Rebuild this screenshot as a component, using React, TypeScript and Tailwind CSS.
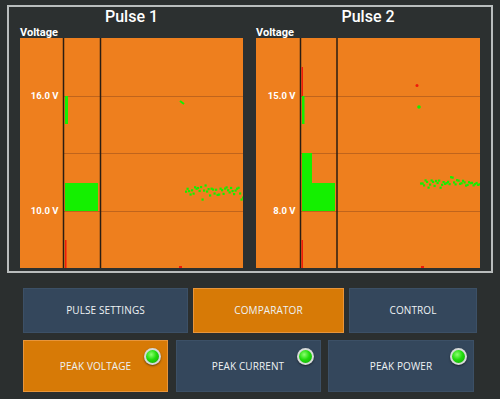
import React from "react";

type Pt = [number, number];

function scatter(seed: number, x0: number, x1: number, base: number, spread: number): Pt[] {
  let s = seed;
  const rnd = () => {
    s = (s * 9301 + 49297) % 233280;
    return s / 233280;
  };
  const pts: Pt[] = [];
  for (let x = x0; x <= x1; x += 1.5) {
    const r = rnd();
    const y = base + (rnd() - 0.5) * spread * (r > 0.75 ? 2 : 1);
    pts.push([x, y]);
  }
  return pts;
}

const scatter1 = scatter(7, 165, 222, 152, 9);
const scatter2 = scatter(13, 164, 223, 144, 6);

type Bar = { x: number; y: number; w: number; h: number; c: string };

type ChartProps = {
  title: string;
  width: number;
  split: [number, number];
  top: string;
  bottom: string;
  bars: Bar[];
  dots: Pt[];
  extra?: React.ReactNode;
};

function Chart({ title, width, split, top, bottom, bars, dots, extra }: ChartProps) {
  const grid = [58, 115, 173];
  return (
    <div className="flex flex-col" style={{ width }}>
      <div className="h-[20px] text-center text-[16px] font-medium leading-[20px] text-white">
        {title}
      </div>
      <div className="h-[11px] text-[11px] font-bold leading-[11px] text-white">Voltage</div>
      <div className="relative h-[230px] bg-[#ee7f1e]">
        <svg className="absolute inset-0" width={width} height={230}>
          {grid.map((y) => (
            <line key={y} x1={split[0]} x2={width} y1={y + 0.5} y2={y + 0.5} stroke="#c0641c" strokeWidth={1} />
          ))}
          <line x1={split[0]} x2={split[0]} y1={0} y2={230} stroke="#2a1d12" strokeWidth={1.5} />
          <line x1={split[1]} x2={split[1]} y1={0} y2={230} stroke="#2a1d12" strokeWidth={1.5} />
          {bars.map((b, i) => (
            <rect key={i} x={b.x} y={b.y} width={b.w} height={b.h} fill={b.c} />
          ))}
          {dots.map(([x, y], i) => (
            <rect key={i} x={x} y={y} width={2.2} height={2.2} fill="#14f000" />
          ))}
          {extra}
        </svg>
        <span className="absolute top-[52px] text-[9.5px] font-bold leading-[12px] text-white" style={{ right: width - split[0] + 5 }}>
          {top}
        </span>
        <span className="absolute top-[167px] text-[9.5px] font-bold leading-[12px] text-white" style={{ right: width - split[0] + 5 }}>
          {bottom}
        </span>
      </div>
    </div>
  );
}

function Led() {
  return (
    <span className="absolute right-[6px] top-[7px] flex h-[17px] w-[17px] items-center justify-center rounded-full bg-[#d6dad8] shadow-[0_1px_2px_rgba(0,0,0,0.5)]">
      <span className="h-[13px] w-[13px] rounded-full bg-[radial-gradient(circle_at_40%_35%,#8dff70_0%,#21dc0c_45%,#0f9f05_100%)]" />
    </span>
  );
}

function Btn({ label, w, h, active, led }: { label: string; w: number; h: number; active?: boolean; led?: boolean }) {
  return (
    <div
      className={[
        "relative flex items-center justify-center text-[10px] tracking-[0.1px] text-[#eef2f4]",
        active ? "border border-[#e8953a] bg-[#d77a06]" : "border border-[#3c5066] bg-[#34475c]",
      ].join(" ")}
      style={{ width: w, height: h }}
    >
      {label}
      {led ? <Led /> : null}
    </div>
  );
}

export default function App() {
  return (
    <div className="h-[399px] w-[500px] overflow-hidden bg-[#2b2f2f] pt-[5px]" style={{ fontFamily: "Roboto, 'Liberation Sans', sans-serif" }}>
      <div className="ml-[7px] flex h-[268px] w-[486px] gap-[13px] border-2 border-[#b9bdbd] bg-[#2c3030] pl-[11px]">
        <Chart
          title="Pulse 1"
          width={223}
          split={[43.5, 80.5]}
          top="16.0 V"
          bottom="10.0 V"
          bars={[
            { x: 45, y: 58, w: 3, h: 28, c: "#14f000" },
            { x: 45, y: 145, w: 33, h: 28, c: "#14f000" },
            { x: 45, y: 202, w: 1.5, h: 28, c: "#f01a0a" },
            { x: 159, y: 228, w: 3, h: 2, c: "#f01a0a" },
          ]}
          dots={scatter1}
          extra={<line x1={160} y1={63} x2={164} y2={66} stroke="#14f000" strokeWidth={2} />}
        />
        <Chart
          title="Pulse 2"
          width={224}
          split={[44.5, 81]}
          top="15.0 V"
          bottom="8.0 V"
          bars={[
            { x: 45.5, y: 29, w: 1.5, h: 29, c: "#f01a0a" },
            { x: 46, y: 58, w: 2.5, h: 28, c: "#14f000" },
            { x: 46, y: 115, w: 10, h: 30, c: "#14f000" },
            { x: 46, y: 145, w: 33, h: 28, c: "#14f000" },
            { x: 45.5, y: 202, w: 1.5, h: 28, c: "#f01a0a" },
            { x: 165, y: 228, w: 3, h: 2, c: "#f01a0a" },
          ]}
          dots={scatter2}
          extra={
            <>
              <circle cx={161} cy={47.5} r={1.5} fill="#f01a0a" />
              <circle cx={163} cy={69} r={1.8} fill="#14f000" />
            </>
          }
        />
      </div>
      <div className="ml-[23px] mt-[15px] flex flex-col gap-[7px]" style={{ fontFamily: "'Open Sans', 'Noto Sans', sans-serif" }}>
        <div className="flex gap-[5px]">
          <Btn label="PULSE SETTINGS" w={165} h={45} />
          <Btn label="COMPARATOR" w={151} h={45} active />
          <Btn label="CONTROL" w={128} h={45} />
        </div>
        <div className="flex gap-[7.5px]">
          <Btn label="PEAK VOLTAGE" w={145} h={52} active led />
          <Btn label="PEAK CURRENT" w={145} h={52} led />
          <Btn label="PEAK POWER" w={146} h={52} led />
        </div>
      </div>
    </div>
  );
}
